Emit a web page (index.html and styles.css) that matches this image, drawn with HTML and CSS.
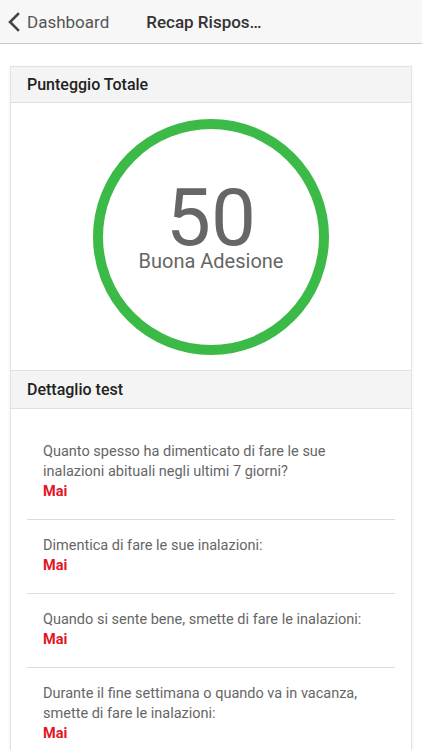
FILE: index.html
```html
<!DOCTYPE html>
<html lang="it">

<head>
  <meta charset="UTF-8" />
  <meta name="viewport" content="width=device-width, initial-scale=1.0" />
  <title>Recap Risposte</title>
  <link rel="stylesheet" href="styles.css">
</head>

<body>
  <div class="navbar">
    <a class="back" href="#">
      <svg class="back-icon" width="14" height="20" viewBox="0 0 14 20">
        <polyline points="11,2 3,10 11,18" fill="none" stroke="#444" stroke-width="2.6" stroke-linecap="square" />
      </svg>
      Dashboard
    </a>
    <span class="nav-title">Recap Rispos…</span>
  </div>

  <div class="card">
    <div class="card-header">Punteggio Totale</div>
    <div class="score-box">
      <div class="score-ring">
        <div class="score-value">50</div>
        <div class="score-label">Buona Adesione</div>
      </div>
    </div>

    <div class="card-header section">Dettaglio test</div>
    <ul class="answers">
      <li>
        <p class="question">Quanto spesso ha dimenticato di fare le sue inalazioni abituali negli ultimi 7 giorni?</p>
        <p class="answer">Mai</p>
      </li>
      <li>
        <p class="question">Dimentica di fare le sue inalazioni:</p>
        <p class="answer">Mai</p>
      </li>
      <li>
        <p class="question">Quando si sente bene, smette di fare le inalazioni:</p>
        <p class="answer">Mai</p>
      </li>
      <li>
        <p class="question">Durante il fine settimana o quando va in vacanza, smette di fare le inalazioni:</p>
        <p class="answer">Mai</p>
      </li>
    </ul>
  </div>
</body>

</html>
```

FILE: styles.css
```css
body {
  margin: 0;
  font-family: Roboto, "Liberation Sans", sans-serif;
  background: #fff;
  color: #666;
}

.navbar {
  height: 44px;
  box-sizing: border-box;
  display: flex;
  align-items: center;
  background: #f7f7f7;
  border-bottom: 1px solid #c8c8c8;
  padding-left: 7px;
}

.back {
  display: flex;
  align-items: center;
  gap: 6px;
  color: #555;
  text-decoration: none;
  font-size: 17px;
}

.back-icon {
  display: block;
}

.nav-title {
  margin-left: 37px;
  font-size: 17px;
  font-weight: 500;
  color: #333;
}

.card {
  margin: 22px 10px 0;
  border: 1px solid #e4e4e4;
  box-shadow: 0 1px 3px rgba(0, 0, 0, 0.08);
}

.card-header {
  height: 36px;
  box-sizing: border-box;
  display: flex;
  align-items: center;
  padding-left: 16px;
  background: #f4f4f4;
  border-bottom: 1px solid #e0e0e0;
  font-size: 16px;
  font-weight: 500;
  color: #222;
}

.card-header.section {
  height: 39px;
  border-top: 1px solid #e0e0e0;
}

.score-box {
  display: flex;
  justify-content: center;
  padding: 16px 0 15px;
}

.score-ring {
  width: 236px;
  height: 236px;
  box-sizing: border-box;
  border: 10px solid #3cba47;
  border-radius: 50%;
  display: flex;
  flex-direction: column;
  align-items: center;
  justify-content: center;
  padding-bottom: 18px;
}

.score-value {
  font-size: 80px;
  line-height: 66px;
  color: #666;
}

.score-label {
  font-size: 20px;
  line-height: 20px;
  color: #666;
}

.answers {
  list-style: none;
  margin: 0;
  padding: 17px 16px 0;
}

.answers li {
  padding: 16px 16px 17px;
  border-bottom: 1px solid #dcdcdc;
}

.answers li:last-child {
  border-bottom: none;
}

.question,
.answer {
  margin: 0;
  font-size: 14.5px;
  line-height: 20px;
}

.answer {
  color: #e3161f;
  font-weight: 700;
}
```
